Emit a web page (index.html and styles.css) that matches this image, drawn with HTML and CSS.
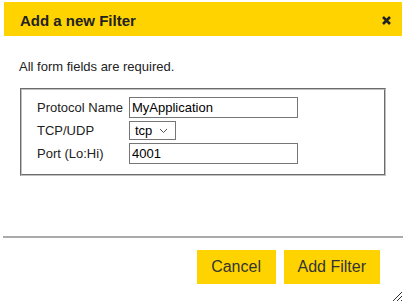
FILE: index.html
```html
<!DOCTYPE html>
<html lang="en">

<head>
  <meta charset="UTF-8">
  <title>Add a new Filter</title>
  <link rel="stylesheet" href="styles.css">
</head>

<body>
  <div class="dialog">
    <div class="titlebar">
      <span class="title">Add a new Filter</span>
      <span class="close" title="Close">
        <svg width="9" height="9" viewBox="0 0 9 9">
          <path d="M1 1 L8 8 M8 1 L1 8" stroke="#222" stroke-width="2.6" stroke-linecap="butt" />
        </svg>
      </span>
    </div>
    <div class="content">
      <p class="note">All form fields are required.</p>
      <fieldset class="filterBox">
        <table class="form">
          <tr>
            <td class="lbl">Protocol Name</td>
            <td><input type="text" class="txt" value="MyApplication"></td>
          </tr>
          <tr>
            <td class="lbl">TCP/UDP</td>
            <td>
              <div class="sel">
                <span>tcp</span>
                <svg width="9" height="6" viewBox="0 0 9 6">
                  <path d="M1 1 L4.5 4.5 L8 1" fill="none" stroke="#555" stroke-width="1" />
                </svg>
              </div>
            </td>
          </tr>
          <tr>
            <td class="lbl">Port (Lo:Hi)</td>
            <td><input type="text" class="txt" value="4001"></td>
          </tr>
        </table>
      </fieldset>
    </div>
    <div class="footer">
      <button type="button" class="btn">Cancel</button>
      <button type="button" class="btn">Add Filter</button>
    </div>
    <svg class="grip" width="12" height="12" viewBox="0 0 12 12">
      <path d="M11 2 L2 11 M11 6 L6 11 M11 10 L10 11" stroke="#333" stroke-width="1" />
    </svg>
  </div>
</body>

</html>
```

FILE: styles.css
```css
body {
  margin: 0;
  background: #fff;
  font-family: "Liberation Sans", Arial, sans-serif;
  color: #222;
}

.dialog {
  width: 406px;
  height: 303px;
  box-sizing: border-box;
  padding: 2px 4px 0 4px;
  position: relative;
  display: flex;
  flex-direction: column;
}

.titlebar {
  height: 34px;
  background: #ffd300;
  display: flex;
  align-items: center;
  justify-content: space-between;
  padding: 0 11px 0 16px;
}

.title {
  font-size: 15px;
  font-weight: bold;
  color: #222;
  padding-top: 2px;
}

.close {
  display: flex;
  padding-top: 3px;
}

.content {
  padding: 0 15px;
  flex: 1;
}

.note {
  margin: 23px 0 14px 0;
  font-size: 13px;
  line-height: 15px;
}

.filterBox {
  margin: 0 0 0 1px;
  width: 366px;
  box-sizing: border-box;
  border: 2px groove #c0c0c0;
  padding: 5px 13px 8px 13px;
}

.form {
  border-collapse: separate;
  border-spacing: 2px;
  font-size: 13px;
}

.form td {
  padding: 0;
  height: 21px;
}

.lbl {
  width: 90px;
}

.txt {
  box-sizing: border-box;
  width: 169px;
  height: 21px;
  margin: 0;
  border: 1px solid #767676;
  padding: 0 2px;
  font-family: "Liberation Sans", Arial, sans-serif;
  font-size: 13px;
  color: #000;
  display: block;
}

.sel {
  box-sizing: border-box;
  width: 47px;
  height: 19px;
  border: 1px solid #767676;
  display: flex;
  align-items: center;
  justify-content: space-between;
  padding: 0 7px 0 5px;
  color: #000;
}

.footer {
  margin: 0 -1px;
  border-top: 2px solid #aaa;
  height: 67px;
  display: flex;
  justify-content: flex-end;
  align-items: flex-start;
  gap: 8px;
  padding: 12px 23px 0 0;
  box-sizing: border-box;
}

.btn {
  height: 34px;
  padding: 0 14px;
  min-width: 79px;
  border: none;
  background: #ffd300;
  color: #333;
  font-family: "Liberation Sans", Arial, sans-serif;
  font-size: 16px;
}

.grip {
  position: absolute;
  right: 3px;
  bottom: 1px;
}
```
